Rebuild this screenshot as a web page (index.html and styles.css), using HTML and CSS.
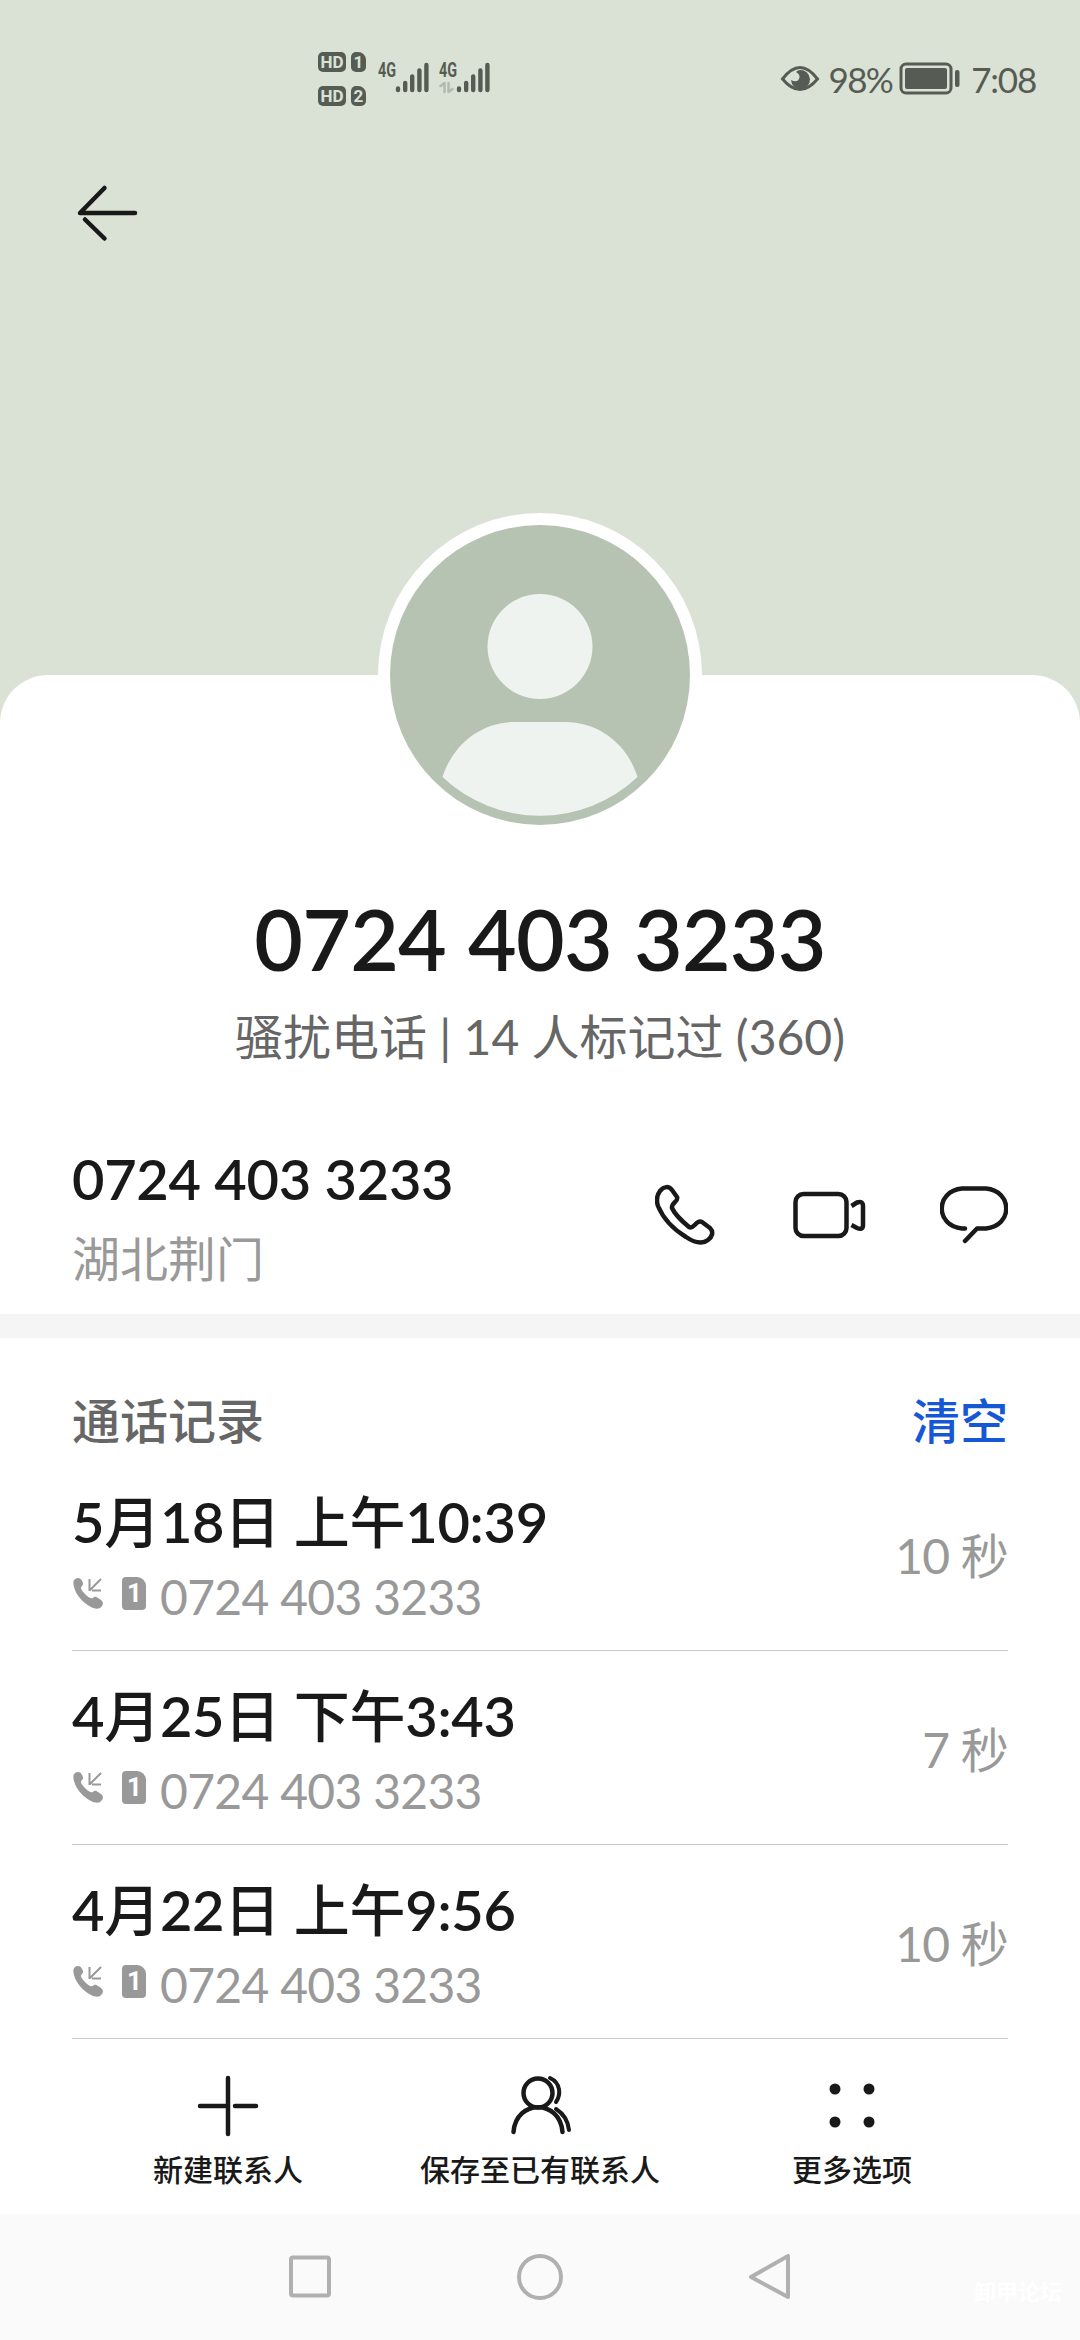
FILE: index.html
```
<!doctype html>
<html lang="zh-CN">

<head>
    <meta charset="utf-8">
    <title>联系人</title>
    <link rel="stylesheet" href="styles.css">
</head>

<body>
    <svg class="defs">
        <symbol id="incoming" viewBox="0 0 32 34">
            <path fill="#999" d="M3 3c3-2 6-1 7 2 2 3 1 4 0 5-2 2-1 4 3 8 4 4 6 5 8 4 2-2 3-1 5 0 5 3 6 5 4 8-3 4-7 3-11 1C11 27 4 19 2 11 1 7 1 5 3 3z" />
            <path fill="none" stroke="#999" stroke-width="2" d="M29 3 18 14M17.500 3v12M20 14.500h9" />
        </symbol>
    </svg>

    <div class="top">
        <div class="statusbar">
            <div class="hd">
                <div><b>HD</b><i>1</i></div>
                <div><b>HD</b><i>2</i></div>
            </div>
            <div class="signal">
                <span>4G</span>
                <svg width="52" height="34" viewBox="0 0 52 34">
                    <path d="M20 30v-1.500M27.200 30v-7M34.200 30v-13.500M41.400 30v-19.500M48.400 30v-25" />
                </svg>
            </div>
            <div class="signal">
                <span>4G</span>
                <svg width="52" height="34" viewBox="0 0 52 34">
                    <path d="M20 30v-1.500M27.200 30v-7M34.200 30v-13.500M41.400 30v-19.500M48.400 30v-25" />
                    <path class="data" d="M1.500 26l4-3v9M9.500 23v9l4-3" />
                </svg>
            </div>
            <div class="right">
                <svg class="eye" width="40" height="28" viewBox="0 0 40 28">
                    <path fill="none" stroke="#565c54" stroke-width="3" d="M2.500 14Q20-9 37.500 14Q20 35 2.500 14z" />
                    <path fill="#565c54" d="M20 5a9.500 9.500 0 1 1-9 10q6 3 8-1t-3-7q2-2 4-2z" />
                </svg>
                <span class="percent">98%</span>
                <svg width="62" height="34" viewBox="0 0 62 34">
                    <rect x="2" y="2" width="50" height="29" rx="5" fill="none" stroke="#565c54" stroke-width="3" />
                    <rect x="6" y="6" width="42" height="21" rx="2" fill="#565c54" />
                    <rect x="56" y="8" width="4.500" height="17" rx="2" fill="#565c54" />
                </svg>
                <span class="time">7:08</span>
            </div>
        </div>
        <svg class="back" width="64" height="60" viewBox="0 0 64 60">
            <path d="M59 30H4L28.500 5M9 36.500 28.500 55.500" />
        </svg>
    </div>

    <div class="card">
        <svg class="avatar" width="324" height="324" viewBox="0 0 324 324">
            <circle cx="162" cy="162" r="162" fill="#fff" />
            <circle cx="162" cy="162" r="150" fill="#b6c3b3" />
            <circle cx="162" cy="133.500" r="52.500" fill="#eff3ef" />
            <path fill="#eff3ef" d="M137 209h50c34 0 62 22 72.500 55a142 142 0 0 1-195 0C75 231 103 209 137 209z" />
        </svg>
        <h1>0724 403 3233</h1>
        <p class="mark">骚扰电话 <span class="bar">|</span> 14 人标记过 (360)</p>

        <div class="phone">
            <div class="info">
                <div class="number">0724 403 3233</div>
                <div class="place">湖北荆门</div>
            </div>
            <svg class="icon" width="62" height="62" viewBox="0 0 62 62">
                <path d="M5 7C9 2 14 2 17 6L22 13C24 17 16 19 17 24C20 31 28 38 34 43C39 46 41 35 47 38L55 44C59 48 57 53 53 56C48 60 40 59 31 53C18 45 8 34 3 22C1 16 2 11 5 7Z" />
            </svg>
            <svg class="icon video" width="74" height="50" viewBox="0 0 74 50">
                <rect x="2.500" y="4" width="51" height="42" rx="8" />
                <path class="lens" d="M58.500 16 64 12.500Q70 10.500 70 16V35Q70 40.500 64 38L58.500 35" />
            </svg>
            <svg class="icon" width="68" height="60" viewBox="0 0 68 60">
                <path d="M25 43.500H22C-5 41-5 6 22 3.500H46C73 6 73 41 46 43.500H37L25 56" />
            </svg>
        </div>
    </div>

    <div class="records">
        <div class="heading">
            <span>通话记录</span>
            <a>清空</a>
        </div>
        <div class="record">
            <div class="call">
                <div class="date"><b>5</b>月<b>18</b>日 上午<b>10:39</b></div>
                <div class="from"><svg width="32" height="34"><use href="#incoming" /></svg><i>1</i>0724 403 3233</div>
            </div>
            <div class="duration">10 秒</div>
        </div>
        <div class="record">
            <div class="call">
                <div class="date"><b>4</b>月<b>25</b>日 下午<b>3:43</b></div>
                <div class="from"><svg width="32" height="34"><use href="#incoming" /></svg><i>1</i>0724 403 3233</div>
            </div>
            <div class="duration">7 秒</div>
        </div>
        <div class="record">
            <div class="call">
                <div class="date"><b>4</b>月<b>22</b>日 上午<b>9:56</b></div>
                <div class="from"><svg width="32" height="34"><use href="#incoming" /></svg><i>1</i>0724 403 3233</div>
            </div>
            <div class="duration">10 秒</div>
        </div>
    </div>

    <div class="toolbar">
        <div>
            <svg width="66" height="66" viewBox="0 0 66 66">
                <path d="M33 5V61M5 33H31M40 33H61" />
            </svg>
            新建联系人
        </div>
        <div>
            <svg width="66" height="66" viewBox="0 0 66 66">
                <circle cx="31" cy="20" r="14.500" />
                <path d="M6.500 59C9 26 53 26 55.500 59" />
                <path class="thin" d="M43 5C54 10 54 22 49 29M49 36C57 41 61 48 62 57" />
            </svg>
            保存至已有联系人
        </div>
        <div>
            <svg class="dots" width="66" height="66" viewBox="0 0 66 66">
                <circle cx="16" cy="16" r="5.500" />
                <circle cx="50" cy="16" r="5.500" />
                <circle cx="16" cy="49" r="5.500" />
                <circle cx="50" cy="49" r="5.500" />
            </svg>
            更多选项
        </div>
    </div>

    <div class="navbar">
        <svg width="50" height="50" viewBox="0 0 50 50">
            <rect x="6" y="5.500" width="38" height="38" rx="2" />
        </svg>
        <svg width="50" height="50" viewBox="0 0 50 50">
            <circle cx="25" cy="25" r="21" />
        </svg>
        <svg width="50" height="50" viewBox="0 0 50 50">
            <path d="M43 4V45L6 25Z" />
        </svg>
        <div class="stamp">卸甲论坛</div>
    </div>
</body>

</html>
```
FILE: styles.css
```
* {
    box-sizing: border-box;
}

body {
    margin: 0;
    width: 1080px;
    height: 2340px;
    overflow: hidden;
    background-color: white;
    color: #191919;
    font-family: Lato, "Noto Sans CJK SC", sans-serif;
    font-size: 48px;
}

svg {
    display: block;
    flex: none;
}

i {
    font-style: normal;
}

.defs {
    position: absolute;
    width: 0;
    height: 0;
}

/* top */
.top {
    height: 723px;
    background-color: #dae2d5;
}

.statusbar {
    display: flex;
    height: 156px;
    padding: 52px 44px 0 318px;
    color: #565c54;
}

.hd {
    width: 60px;
}

.hd div {
    display: flex;
    gap: 5px;
    margin-bottom: 14px;
}

.hd b,
.hd i {
    height: 20px;
    border-radius: 5px;
    background-color: #565c54;
    color: #dae2d5;
    font: bold 17px/20px Roboto, sans-serif;
    text-align: center;
}

.hd b {
    width: 28px;
}

.hd i {
    width: 15px;
    border-top-right-radius: 8px;
}

.signal {
    position: relative;
    width: 61px;
    padding-top: 8px;
}

.signal span {
    position: absolute;
    left: 0;
    top: 8px;
    font: bold 20px/20px Roboto, sans-serif;
    transform: scaleX(0.72);
    transform-origin: left;
}

.signal path {
    fill: none;
    stroke: #565c54;
    stroke-width: 4.400;
    stroke-linecap: round;
    stroke-linejoin: round;
}

.signal .data {
    stroke: #b4bab0;
    stroke-width: 2.500;
}

.right {
    display: flex;
    align-items: center;
    height: 54px;
    margin-left: auto;
    font-size: 35px;
}

.percent {
    margin: 0 7px 0 9px;
    letter-spacing: -1.700px;
}

.time {
    margin-left: 10px;
    letter-spacing: -1.200px;
}

.back {
    margin-left: 76px;
    margin-top: 27px;
    fill: none;
    stroke: #191919;
    stroke-width: 4.500;
    stroke-linecap: round;
    stroke-linejoin: round;
}

/* card */
.card {
    position: relative;
    height: 639px;
    margin-top: -48px;
    padding-top: 213px;
    border-radius: 48px 48px 0 0;
    background-color: white;
}

.avatar {
    position: absolute;
    left: 378px;
    top: -162px;
}

h1 {
    margin: 0;
    font-size: 84px;
    font-weight: 600;
    line-height: 102px;
    text-align: center;
    letter-spacing: -0.800px;
    word-spacing: 2px;
}

.mark {
    margin: 15px 0 0;
    color: #666;
    line-height: 64px;
    text-align: center;
}

.phone {
    display: flex;
    align-items: center;
    padding: 72px 72px 0;
}

.info {
    flex: 1;
}

.number {
    font-size: 56px;
    font-weight: 600;
    line-height: 76px;
    letter-spacing: -0.300px;
}

.place {
    padding-top: 2px;
    margin-bottom: 3px;
    color: #999;
    line-height: 80px;
}

.icon {
    position: relative;
    top: -7px;
    fill: none;
    stroke: #191919;
    stroke-width: 4.500;
    stroke-linecap: round;
    stroke-linejoin: round;
}

.video {
    margin: 0 73px 0 76px;
}

.lens {
    stroke-linecap: butt;
}

/* records */
.records {
    padding: 48px 72px 0;
    border-top: 24px solid #f5f5f5;
}

.heading {
    display: flex;
    justify-content: space-between;
    height: 71px;
    color: #666;
    font-weight: 500;
    line-height: 70px;
}

.heading a {
    color: #1657d6;
}

.record {
    display: flex;
    justify-content: space-between;
    align-items: center;
    height: 194px;
    border-bottom: 1px solid #c8c8c8;
}

.date {
    padding-top: 7px;
    font-size: 56px;
    font-weight: 500;
    line-height: 78px;
    letter-spacing: -0.300px;
}

.date b {
    font-weight: 600;
}

.from {
    display: flex;
    align-items: center;
    height: 70px;
    color: #999;
    letter-spacing: -0.700px;
}

.from svg,
.from i {
    position: relative;
    top: -3px;
}

.from i {
    width: 24px;
    height: 33px;
    margin: 0 14px 0 18px;
    border-radius: 4px 9px 4px 4px;
    background-color: #999;
    color: white;
    font: bold 26px/33px Roboto, sans-serif;
    text-align: center;
}

.duration {
    padding-bottom: 2px;
    color: #999;
    letter-spacing: -0.800px;
}

/* toolbar */
.toolbar {
    display: flex;
    justify-content: center;
    height: 175px;
    padding-top: 34px;
    font-size: 30px;
    font-weight: 500;
    line-height: 60px;
}

.toolbar div {
    display: flex;
    flex-direction: column;
    align-items: center;
    width: 312px;
}

.toolbar svg {
    fill: none;
    stroke: #191919;
    stroke-width: 4.500;
    stroke-linecap: round;
}

.toolbar .thin {
    stroke-width: 4;
}

.toolbar .dots {
    fill: #191919;
    stroke: none;
}

/* navbar */
.navbar {
    position: relative;
    display: flex;
    justify-content: center;
    align-items: center;
    gap: 180px;
    height: 126px;
    background-color: #fafafa;
}

.navbar svg {
    fill: none;
    stroke: #b0b0b0;
    stroke-width: 4;
    stroke-linejoin: round;
}

.stamp {
    position: absolute;
    right: 18px;
    bottom: 34px;
    color: white;
    font-size: 22px;
    font-weight: bold;
    line-height: 28px;
}
```
